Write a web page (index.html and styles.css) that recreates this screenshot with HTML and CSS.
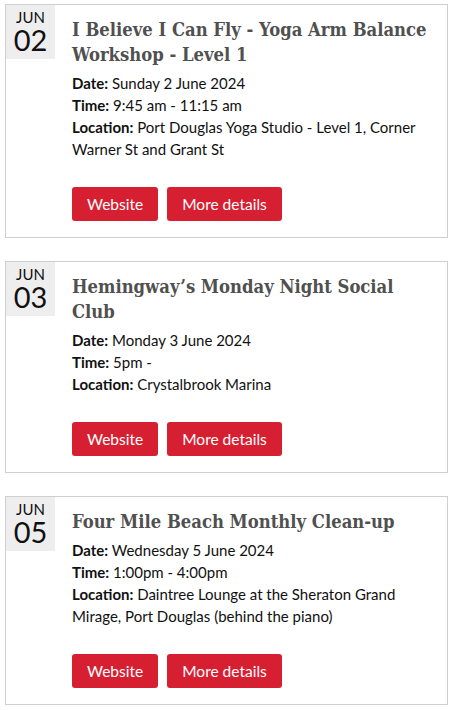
FILE: index.html
```html
<!DOCTYPE html>
<html lang="en">
<head>
<meta charset="utf-8">
<title>Events</title>
<link rel="stylesheet" href="styles.css">
</head>
<body>
<div class="events">
  <article class="event">
    <div class="date"><span class="month">JUN</span><span class="day">02</span></div>
    <div class="content">
      <h3 class="title">I Believe I Can Fly - Yoga Arm Balance Workshop - Level 1</h3>
      <p class="meta"><b>Date:</b> Sunday 2 June 2024</p>
      <p class="meta"><b>Time:</b> 9:45 am - 11:15 am</p>
      <p class="meta"><b>Location:</b> Port Douglas Yoga Studio - Level 1, Corner Warner St and Grant St</p>
      <div class="actions"><a class="btn" href="#">Website</a><a class="btn" href="#">More details</a></div>
    </div>
  </article>
  <article class="event">
    <div class="date"><span class="month">JUN</span><span class="day">03</span></div>
    <div class="content">
      <h3 class="title">Hemingway’s Monday Night Social Club</h3>
      <p class="meta"><b>Date:</b> Monday 3 June 2024</p>
      <p class="meta"><b>Time:</b> 5pm -</p>
      <p class="meta"><b>Location:</b> Crystalbrook Marina</p>
      <div class="actions"><a class="btn" href="#">Website</a><a class="btn" href="#">More details</a></div>
    </div>
  </article>
  <article class="event">
    <div class="date"><span class="month">JUN</span><span class="day">05</span></div>
    <div class="content">
      <h3 class="title">Four Mile Beach Monthly Clean-up</h3>
      <p class="meta"><b>Date:</b> Wednesday 5 June 2024</p>
      <p class="meta"><b>Time:</b> 1:00pm - 4:00pm</p>
      <p class="meta"><b>Location:</b> Daintree Lounge at the Sheraton Grand Mirage, Port Douglas (behind the piano)</p>
      <div class="actions"><a class="btn" href="#">Website</a><a class="btn" href="#">More details</a></div>
    </div>
  </article>
</div>
</body>
</html>
```
FILE: styles.css
```css
html, body {
  margin: 0;
  padding: 0;
  background: #fff;
}
body {
  font-family: Lato, "Liberation Sans", sans-serif;
  color: #111;
}
.events {
  padding: 4px 6px 0 5px;
  display: flex;
  flex-direction: column;
  gap: 23px;
}
.event {
  display: flex;
  border: 1px solid #cfcfcf;
}
.date {
  flex: 0 0 49px;
  height: 54px;
  background: #eeeeee;
  display: flex;
  flex-direction: column;
  align-items: center;
  padding-top: 4px;
  box-sizing: border-box;
}
.month {
  font-size: 15px;
  line-height: 16px;
}
.day {
  font-size: 29px;
  line-height: 30px;
}
.content {
  flex: 1;
  padding: 12px 10px 16px 17px;
}
.title {
  margin: 0 0 5px;
  font-family: "DejaVu Serif", serif;
  font-stretch: condensed;
  font-weight: bold;
  font-size: 18.3px;
  line-height: 25px;
  color: #505050;
}
.meta {
  margin: 0;
  font-size: 15px;
  line-height: 22px;
}
.meta b {
  font-weight: bold;
}
.actions {
  display: flex;
  gap: 9px;
  margin-top: 27px;
}
.btn {
  display: inline-flex;
  align-items: center;
  justify-content: center;
  height: 34px;
  padding: 0 15px;
  background: #d71f32;
  color: #fff;
  text-decoration: none;
  font-size: 15.5px;
  border-radius: 3px;
}
```
